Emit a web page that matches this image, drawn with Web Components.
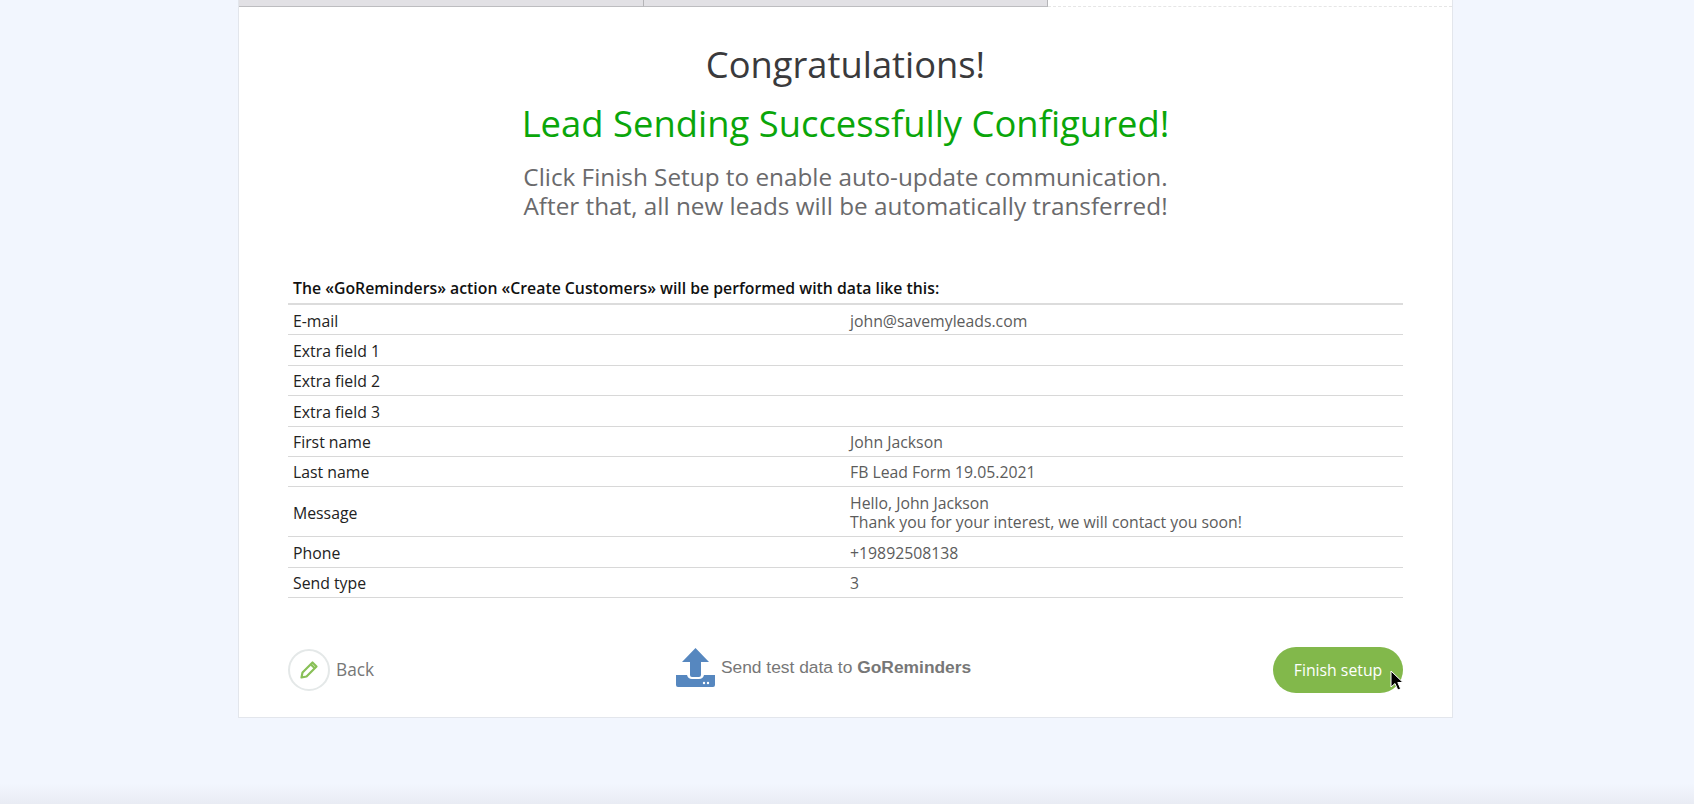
<!DOCTYPE html>
<html>
<head>
<meta charset="utf-8">
<title>Lead Sending</title>
<style>
html, body { margin: 0; padding: 0; height: 804px; overflow: hidden; background: #f2f6fe; font-family: "Open Sans", sans-serif; }
</style>
</head>
<body>
<setup-page>
  <setup-card>
    <setup-tabs slot="tabs"></setup-tabs>
    <setup-message></setup-message>
    <data-table title="The «GoReminders» action «Create Customers» will be performed with data like this:">
      <data-row name="E-mail">john@savemyleads.com</data-row>
      <data-row name="Extra field 1"></data-row>
      <data-row name="Extra field 2"></data-row>
      <data-row name="Extra field 3"></data-row>
      <data-row name="First name">John Jackson</data-row>
      <data-row name="Last name">FB Lead Form 19.05.2021</data-row>
      <data-row name="Message">Hello, John Jackson<br>Thank you for your interest, we will contact you soon!</data-row>
      <data-row name="Phone">+19892508138</data-row>
      <data-row name="Send type">3</data-row>
    </data-table>
    <setup-actions></setup-actions>
  </setup-card>
</setup-page>

<script>
// page background + bottom shade
class SetupPage extends HTMLElement {
  constructor(){
    super();
    this.attachShadow({mode:"open"}).innerHTML = `
    <style>
      :host { display:block; height:804px; position:relative; overflow:hidden; background:#f2f6fe; }
      .wrap { padding-left:238px; }
      .shade { position:absolute; left:0; right:0; bottom:0; height:20px; background:linear-gradient(#f2f6fe00,#e9ecf4); }
    </style>
    <div class="wrap"><slot></slot></div>
    <div class="shade"></div>`;
  }
}
customElements.define("setup-page", SetupPage);

class SetupCard extends HTMLElement {
  constructor(){
    super();
    this.attachShadow({mode:"open"}).innerHTML = `
    <style>
      :host { display:block; width:1215px; height:718px; box-sizing:border-box; background:#fff; border:1px solid #e3e6ec; border-top:0; }
      .body { padding:0 49px; }
    </style>
    <slot name="tabs"></slot>
    <div class="body"><slot></slot></div>`;
  }
}
customElements.define("setup-card", SetupCard);

class SetupTabs extends HTMLElement {
  constructor(){
    super();
    this.attachShadow({mode:"open"}).innerHTML = `
    <style>
      :host { display:flex; height:7px; }
      div { flex:1; box-sizing:border-box; background:#e2e1e5; border-bottom:1px solid #bdbdc0; border-right:1px solid #b5b5b8; }
      .empty { background:none; border:0; border-bottom:1px dashed #e6e6e6; }
    </style>
    <div></div><div></div><div class="empty"></div>`;
  }
}
customElements.define("setup-tabs", SetupTabs);

class SetupMessage extends HTMLElement {
  constructor(){
    super();
    this.attachShadow({mode:"open"}).innerHTML = `
    <style>
      :host { display:block; text-align:center; padding-top:35px; height:268px; box-sizing:border-box; font-family:"Open Sans",sans-serif; }
      h1 { margin:0; font-size:36.300px; line-height:44px; font-weight:400; color:#3a3a3c; }
      h2 { margin:15px 0 0; font-size:36.400px; line-height:44px; font-weight:400; color:#0aa60a; }
      p { margin:17px 0 0; font-size:24.300px; line-height:29px; color:#6a6a6c; }
    </style>
    <h1>Congratulations!</h1>
    <h2>Lead Sending Successfully Configured!</h2>
    <p>Click Finish Setup to enable auto-update communication.<br>After that, all new leads will be automatically transferred!</p>`;
  }
}
customElements.define("setup-message", SetupMessage);

class DataTable extends HTMLElement {
  constructor(){
    super();
    this.attachShadow({mode:"open"}).innerHTML = `
    <style>
      :host { display:block; font-family:"Open Sans",sans-serif; font-size:15.800px; }
      .title { padding:1px 4px 2px 5px; line-height:25px; font-weight:600; color:#111; border-bottom:2px solid #dcdcdc; }
    </style>
    <div class="title"></div>
    <slot></slot>`;
  }
  connectedCallback(){
    this.shadowRoot.querySelector(".title").textContent = this.getAttribute("title");
  }
}
customElements.define("data-table", DataTable);

class DataRow extends HTMLElement {
  constructor(){
    super();
    this.attachShadow({mode:"open"}).innerHTML = `
    <style>
      :host { display:grid; grid-template-columns:557px 1fr; align-items:center; box-sizing:border-box; padding:6.500px 4px 3.400px 5px; min-height:30.400px; border-bottom:1px solid #d8d8d8; line-height:19.500px; }
      .name { color:#222; }
      .val { color:#5c5c5c; }
    </style>
    <div class="name"></div>
    <div class="val"><slot></slot></div>`;
  }
  connectedCallback(){
    this.shadowRoot.querySelector(".name").textContent = this.getAttribute("name");
  }
}
customElements.define("data-row", DataRow);

class SetupActions extends HTMLElement {
  constructor(){
    super();
    this.attachShadow({mode:"open"}).innerHTML = `
    <style>
      :host { display:flex; justify-content:space-between; align-items:center; margin-top:48.800px; height:46px; font-family:"Open Sans",sans-serif; color:#777; }
      .back { display:flex; align-items:center; gap:6px; font-size:17.300px; }
      .circle { width:42px; height:42px; box-sizing:border-box; border:2px solid #e4e8e8; border-radius:50%; display:flex; align-items:center; justify-content:center; }
      .send { display:flex; align-items:flex-start; gap:6px; font-family:"Liberation Sans",sans-serif; font-size:17.400px; margin-top:-4px; }
      .send span { line-height:20px; margin-top:9px; }
      .finish { width:130px; height:46px; border-radius:23px; background:#82b84b; color:#fff; font-size:15.800px; display:flex; align-items:center; justify-content:center; position:relative; }
      .cursor { position:absolute; left:117px; top:23px; }
    </style>
    <div class="back">
      <div class="circle">
        <svg width="20" height="20" viewBox="0 0 20 20" fill="none" stroke="#88c057" stroke-width="2.200" stroke-linejoin="round"><path d="M2.500 17.500l1-5L13.500 2.500l4 4-10 10z"/><path d="M12 4.500l3.500 3.500"/></svg>
      </div>
      <span>Back</span>
    </div>
    <div class="send">
      <svg width="39" height="39" viewBox="0 0 39 39"><path fill="#5687bf" d="M19.500 0L33 14h-8v13q0 2-2 2h-7q-2 0-2-2V14H6z"/><path fill="#5687bf" d="M0 27h11q1 4 5 4h7q4 0 5-4h11v10q0 2-2 2H2q-2 0-2-2z"/><circle cx="28" cy="35" r="1.200" fill="#fff"/><circle cx="32" cy="35" r="1.200" fill="#fff"/></svg>
      <span>Send test data to <b>GoReminders</b></span>
    </div>
    <div class="finish">Finish setup
      <svg class="cursor" width="14" height="22" viewBox="0 0 14 22"><path d="M1 1v16l4-3.500 2.800 6.500 2.800-1.200L7.800 12.500H13z" fill="#000" stroke="#fff" stroke-width="1"/></svg>
    </div>`;
  }
}
customElements.define("setup-actions", SetupActions);
</script>
</body>
</html>
